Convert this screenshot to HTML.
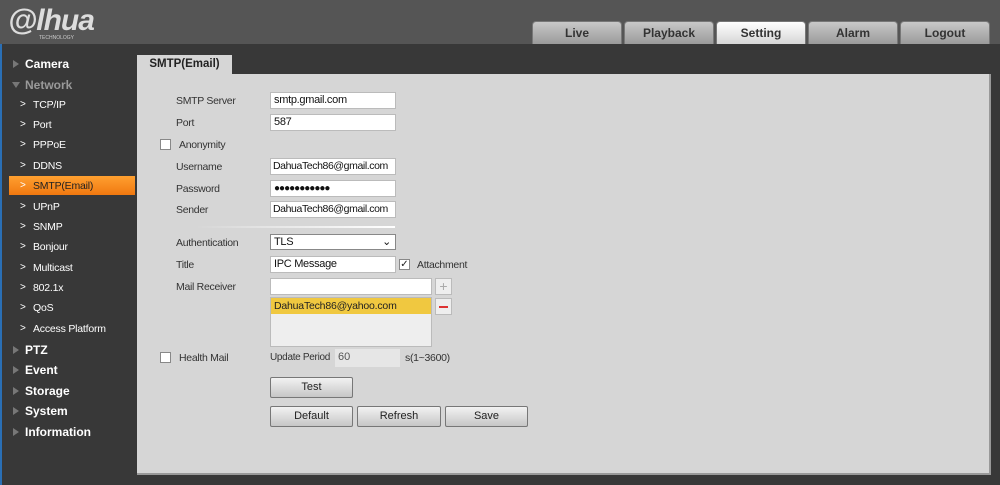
<!DOCTYPE html><html><head><style>
*{margin:0;padding:0;box-sizing:border-box}
body{width:1000px;height:485px;background:#383838;font-family:"Liberation Sans",sans-serif;position:relative;overflow:hidden;font-size:11px;color:#222}
.a{position:absolute}
#hdr{left:0;top:0;width:1000px;height:44px;background:#555}
.tab{top:21px;height:23px;width:90px;border-radius:4px 4px 0 0;background:linear-gradient(#c8c8c8,#9a9a9a);border:1px solid #777;border-bottom:none;text-align:center;font-weight:bold;font-size:12px;line-height:22px;color:#333}
.tab.on{background:linear-gradient(#fff,#d6d6d6)}
.nav{left:25px;color:#fff;font-weight:bold;font-size:12px}
.sub{left:33px;color:#fff;font-size:10.5px;letter-spacing:-0.2px}
.chev{left:20px;color:#fff;font-size:10px}
.tri{left:13px;width:0;height:0;border-top:4px solid transparent;border-bottom:4px solid transparent;border-left:6px solid #777}
.lb{left:176px;font-size:10.5px;color:#333;letter-spacing:-0.3px}
.in{left:270px;width:126px;height:17px;background:#fff;border:1px solid #bbb;font-size:11px;padding-left:3px;line-height:15px;color:#111;white-space:nowrap;overflow:hidden;letter-spacing:-0.3px}
.cb{width:11px;height:11px;background:#fff;border:1px solid #888}
.btn{height:21px;border:1px solid #777;border-radius:2px;background:linear-gradient(#f2f2f2,#c6c6c6);text-align:center;line-height:19px;font-size:11px;color:#222}
</style></head><body>
<div class="a" id="hdr"></div>
<div class="a" style="left:0;top:44px;width:2px;height:441px;background:#2a6fb5"></div>
<div class="a" style="left:8px;top:4px;font-size:30px;font-style:italic;font-weight:bold;color:#ddd;letter-spacing:-1px">@lhua</div>
<div class="a" style="left:39px;top:35px;font-size:5px;color:#ccc">TECHNOLOGY</div>
<div class="a tab" style="left:532px">Live</div>
<div class="a tab" style="left:624px">Playback</div>
<div class="a tab on" style="left:716px">Setting</div>
<div class="a tab" style="left:808px">Alarm</div>
<div class="a tab" style="left:900px">Logout</div>

<div class="a tri" style="top:60px"></div><div class="a nav" style="top:57px">Camera</div>
<div class="a" style="left:12px;top:82px;border-left:4px solid transparent;border-right:4px solid transparent;border-top:6px solid #777"></div><div class="a nav" style="top:78px;color:#999">Network</div>
<div class="a" style="left:9px;top:176px;width:126px;height:19px;background:linear-gradient(#ffa030,#f07810)"></div>
<div class="a chev" style="top:99px">&gt;</div><div class="a sub" style="top:99px">TCP/IP</div>
<div class="a chev" style="top:119px">&gt;</div><div class="a sub" style="top:119px">Port</div>
<div class="a chev" style="top:139px">&gt;</div><div class="a sub" style="top:139px">PPPoE</div>
<div class="a chev" style="top:160px">&gt;</div><div class="a sub" style="top:160px">DDNS</div>
<div class="a chev" style="top:180px">&gt;</div><div class="a sub" style="top:180px;color:#222">SMTP(Email)</div>
<div class="a chev" style="top:201px">&gt;</div><div class="a sub" style="top:201px">UPnP</div>
<div class="a chev" style="top:221px">&gt;</div><div class="a sub" style="top:221px">SNMP</div>
<div class="a chev" style="top:241px">&gt;</div><div class="a sub" style="top:241px">Bonjour</div>
<div class="a chev" style="top:262px">&gt;</div><div class="a sub" style="top:262px">Multicast</div>
<div class="a chev" style="top:282px">&gt;</div><div class="a sub" style="top:282px">802.1x</div>
<div class="a chev" style="top:302px">&gt;</div><div class="a sub" style="top:302px">QoS</div>
<div class="a chev" style="top:323px">&gt;</div><div class="a sub" style="top:323px">Access Platform</div>
<div class="a tri" style="top:346px"></div><div class="a nav" style="top:343px">PTZ</div>
<div class="a tri" style="top:366px"></div><div class="a nav" style="top:363px">Event</div>
<div class="a tri" style="top:387px"></div><div class="a nav" style="top:384px">Storage</div>
<div class="a tri" style="top:407px"></div><div class="a nav" style="top:404px">System</div>
<div class="a tri" style="top:428px"></div><div class="a nav" style="top:425px">Information</div>

<div class="a" style="left:137px;top:74px;width:854px;height:401px;background:#d6d6d6;border-right:2px solid #999;border-bottom:2px solid #999"></div>
<div class="a" style="left:137px;top:55px;width:95px;height:20px;background:#d6d6d6;font-weight:bold;font-size:11.5px;text-align:center;line-height:19px;color:#222">SMTP(Email)</div>

<div class="a lb" style="top:95px">SMTP Server</div><div class="a in" style="top:92px">smtp.gmail.com</div>
<div class="a lb" style="top:117px">Port</div><div class="a in" style="top:114px">587</div>
<div class="a cb" style="left:160px;top:139px"></div><div class="a lb" style="left:179px;top:139px">Anonymity</div>
<div class="a lb" style="top:161px">Username</div><div class="a in" style="top:158px;font-size:10.5px;padding-left:2px;letter-spacing:-0.4px">DahuaTech86@gmail.com</div>
<div class="a lb" style="top:183px">Password</div><div class="a in" style="top:180px;font-size:10px;letter-spacing:-1px">●●●●●●●●●●●</div>
<div class="a lb" style="top:204px">Sender</div><div class="a in" style="top:201px;font-size:10.5px;padding-left:2px;letter-spacing:-0.4px">DahuaTech86@gmail.com</div>
<div class="a" style="left:195px;top:226px;width:200px;height:2px;background:linear-gradient(90deg,#d6d6d6,#fff)"></div>
<div class="a lb" style="top:237px">Authentication</div><div class="a in" style="top:234px;height:16px;border-color:#888">TLS<span style="position:absolute;right:4px;top:0">&#8964;</span></div>
<div class="a lb" style="top:259px">Title</div><div class="a in" style="top:256px">IPC Message</div>
<div class="a cb" style="left:399px;top:259px;font-size:10px;line-height:9px;text-align:center">✓</div><div class="a lb" style="left:417px;top:259px">Attachment</div>
<div class="a lb" style="top:281px">Mail Receiver</div><div class="a in" style="top:278px;width:162px"></div>
<div class="a" style="left:435px;top:278px;width:17px;height:17px;background:#eee;border:1px solid #bbb;color:#aaa;text-align:center;line-height:14px;font-size:14px">+</div>
<div class="a" style="left:270px;top:297px;width:162px;height:50px;background:#eee;border:1px solid #bbb"></div>
<div class="a" style="left:271px;top:298px;width:160px;height:16px;background:#f0c840;font-size:10.5px;padding-left:3px;line-height:16px;letter-spacing:-0.2px">DahuaTech86@yahoo.com</div>
<div class="a" style="left:435px;top:298px;width:17px;height:17px;background:#eee;border:1px solid #bbb"><div class="a" style="left:3px;top:7px;width:9px;height:2px;background:#d33"></div></div>
<div class="a cb" style="left:160px;top:352px"></div><div class="a lb" style="left:179px;top:352px">Health Mail</div>
<div class="a lb" style="left:270px;top:352px;font-size:10px">Update Period</div>
<div class="a" style="left:335px;top:349px;width:65px;height:18px;background:#e6e6e6;font-size:11px;padding-left:3px;line-height:17px;color:#555">60</div>
<div class="a lb" style="left:405px;top:352px">s(1~3600)</div>
<div class="a btn" style="left:270px;top:377px;width:83px">Test</div>
<div class="a btn" style="left:270px;top:406px;width:83px">Default</div>
<div class="a btn" style="left:357px;top:406px;width:84px">Refresh</div>
<div class="a btn" style="left:445px;top:406px;width:83px">Save</div>
</body></html>
